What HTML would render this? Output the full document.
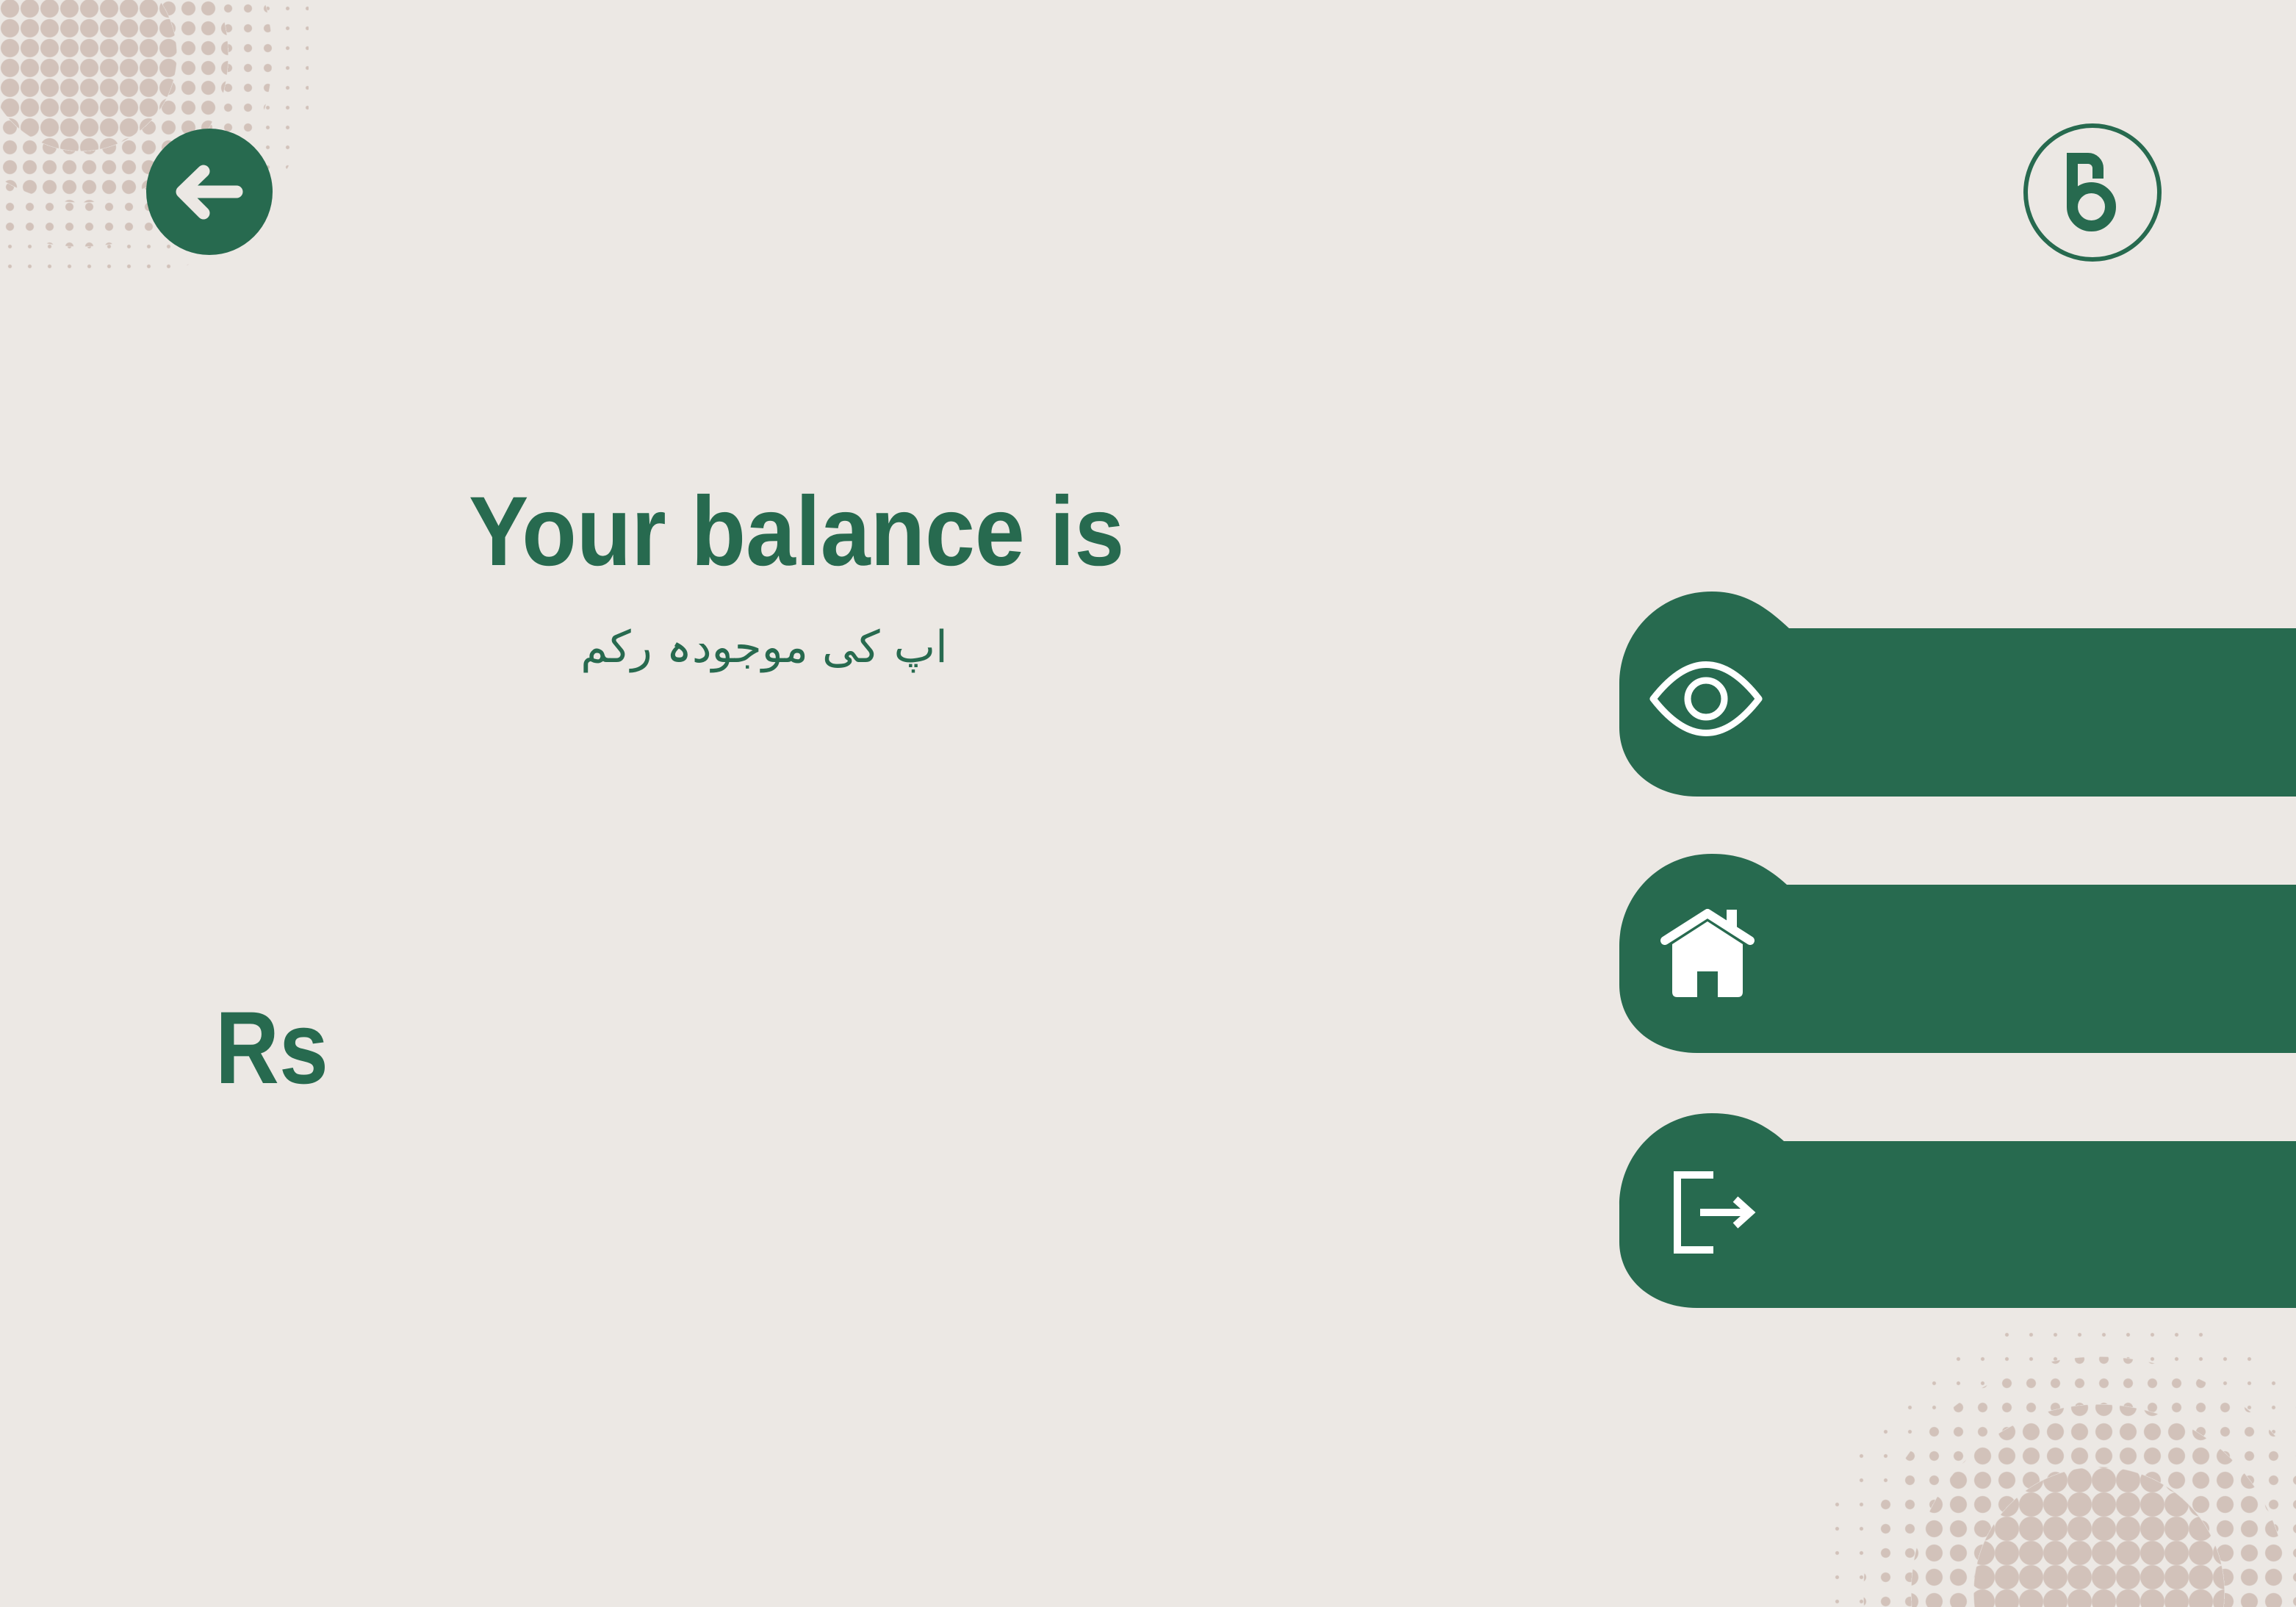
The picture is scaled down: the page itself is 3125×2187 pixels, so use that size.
<!DOCTYPE html>
<html><head><meta charset="utf-8"><style>
html,body{margin:0;padding:0}
body{width:3125px;height:2187px;background:#ECE8E4;position:relative;overflow:hidden;font-family:"Liberation Sans",sans-serif}
.d{position:absolute;}
.tl{left:0;top:0;width:420px;height:380px;background-size:27px 27px;background-position:0 -2px}
.br{left:2480px;top:1760px;width:645px;height:427px;background-size:33px 33px;background-position:4px 7px}
.t1{position:absolute;left:638px;top:657px;font-weight:bold;font-size:134px;color:#276A4F;white-space:nowrap;line-height:1;transform:scaleX(0.91);transform-origin:0 0}
.ur{position:absolute;left:790px;top:846px;width:500px;text-align:center;font-family:"DejaVu Sans",sans-serif;font-size:60px;color:#276A4F;direction:rtl;white-space:nowrap}
.rs{position:absolute;left:293px;top:1356px;font-weight:bold;font-size:140px;color:#276A4F;line-height:1;transform:scaleX(0.86);transform-origin:0 0}
</style></head><body>
<div class="d tl" style="background-image:radial-gradient(circle,#D2C2BA 12px,transparent 13px);-webkit-mask-image:radial-gradient(circle at 110px 75px,#000 0 130px,transparent 131px);mask-image:radial-gradient(circle at 110px 75px,#000 0 130px,transparent 131px)"></div>
<div class="d tl" style="background-image:radial-gradient(circle,#D2C2BA 9px,transparent 10px);-webkit-mask-image:radial-gradient(circle at 110px 75px,transparent 0 131px,#000 131px 200px,transparent 201px);mask-image:radial-gradient(circle at 110px 75px,transparent 0 131px,#000 131px 200px,transparent 201px)"></div>
<div class="d tl" style="background-image:radial-gradient(circle,#D2C2BA 5px,transparent 6px);-webkit-mask-image:radial-gradient(circle at 110px 75px,transparent 0 201px,#000 201px 260px,transparent 261px);mask-image:radial-gradient(circle at 110px 75px,transparent 0 201px,#000 201px 260px,transparent 261px)"></div>
<div class="d tl" style="background-image:radial-gradient(circle,#D2C2BA 2px,transparent 3px);-webkit-mask-image:radial-gradient(circle at 110px 75px,transparent 0 261px,#000 261px 320px,transparent 321px);mask-image:radial-gradient(circle at 110px 75px,transparent 0 261px,#000 261px 320px,transparent 321px)"></div>

<div class="d br" style="background-image:radial-gradient(circle,#D2C2BA 16px,transparent 17px);-webkit-mask-image:radial-gradient(circle at 377px 407px,#000 0 170px,transparent 171px);mask-image:radial-gradient(circle at 377px 407px,#000 0 170px,transparent 171px)"></div>
<div class="d br" style="background-image:radial-gradient(circle,#D2C2BA 11px,transparent 12px);-webkit-mask-image:radial-gradient(circle at 377px 407px,transparent 0 171px,#000 171px 255px,transparent 256px);mask-image:radial-gradient(circle at 377px 407px,transparent 0 171px,#000 171px 255px,transparent 256px)"></div>
<div class="d br" style="background-image:radial-gradient(circle,#D2C2BA 6px,transparent 7px);-webkit-mask-image:radial-gradient(circle at 377px 407px,transparent 0 256px,#000 256px 320px,transparent 321px);mask-image:radial-gradient(circle at 377px 407px,transparent 0 256px,#000 256px 320px,transparent 321px)"></div>
<div class="d br" style="background-image:radial-gradient(circle,#D2C2BA 2px,transparent 3px);-webkit-mask-image:radial-gradient(circle at 377px 407px,transparent 0 321px,#000 321px 380px,transparent 381px);mask-image:radial-gradient(circle at 377px 407px,transparent 0 321px,#000 321px 380px,transparent 381px)"></div>

<div class="t1">Your balance is</div>
<div class="ur">اپ کی موجودہ رکم</div>
<div class="rs">Rs</div>

<svg width="3125" height="2187" style="position:absolute;left:0;top:0">
<path d="M3125 855H2435C2400 822 2370 805 2330 805C2255 805 2204 865 2204 930V990C2204 1045 2250 1084 2310 1084H3125Z" fill="#276A4F"/>
<path d="M3125 1204H2432C2400 1175 2370 1162 2330 1162C2255 1162 2204 1222 2204 1287V1340C2204 1395 2250 1433 2310 1433H3125Z" fill="#276A4F"/>
<path d="M3125 1553H2428C2400 1528 2370 1515 2330 1515C2255 1515 2204 1575 2204 1640V1690C2204 1742 2250 1780 2310 1780H3125Z" fill="#276A4F"/>
<circle cx="285" cy="261" r="86" fill="#276A4F"/>
<path d="M322 261H248M277 233L248 261L277 290" stroke="#ECE8E4" stroke-width="17" fill="none" stroke-linecap="round" stroke-linejoin="round"/>
<circle cx="2848" cy="262" r="91" fill="none" stroke="#276A4F" stroke-width="6"/>
<path d="M2820.5 208V282" stroke="#276A4F" stroke-width="15" fill="none"/>
<path d="M2813 215.5H2842A13.5 13.5 0 0 1 2855.5 229V243" stroke="#276A4F" stroke-width="15" fill="none"/>
<circle cx="2846.5" cy="281.5" r="26" stroke="#276A4F" stroke-width="15" fill="none"/>
<path d="M2250 951Q2322 858 2394 951Q2322 1044 2250 951Z" stroke="#fff" stroke-width="9" fill="none" stroke-linejoin="round"/>
<circle cx="2322" cy="951" r="25" stroke="#fff" stroke-width="9" fill="none"/>
<path d="M2266 1280L2324 1243L2382 1280" stroke="#fff" stroke-width="12" fill="none" stroke-linecap="round" stroke-linejoin="round"/>
<rect x="2350" y="1238" width="14" height="26" fill="#fff"/>
<path d="M2276 1285L2324 1254L2372 1285V1350Q2372 1357 2365 1357H2338V1322H2310V1357H2283Q2276 1357 2276 1350Z" fill="#fff"/>
<path d="M2332 1599H2283V1701H2332" stroke="#fff" stroke-width="10" fill="none"/>
<path d="M2314 1650H2380M2362 1632L2382 1650L2362 1668" stroke="#fff" stroke-width="10" fill="none"/>
</svg>
</body></html>
